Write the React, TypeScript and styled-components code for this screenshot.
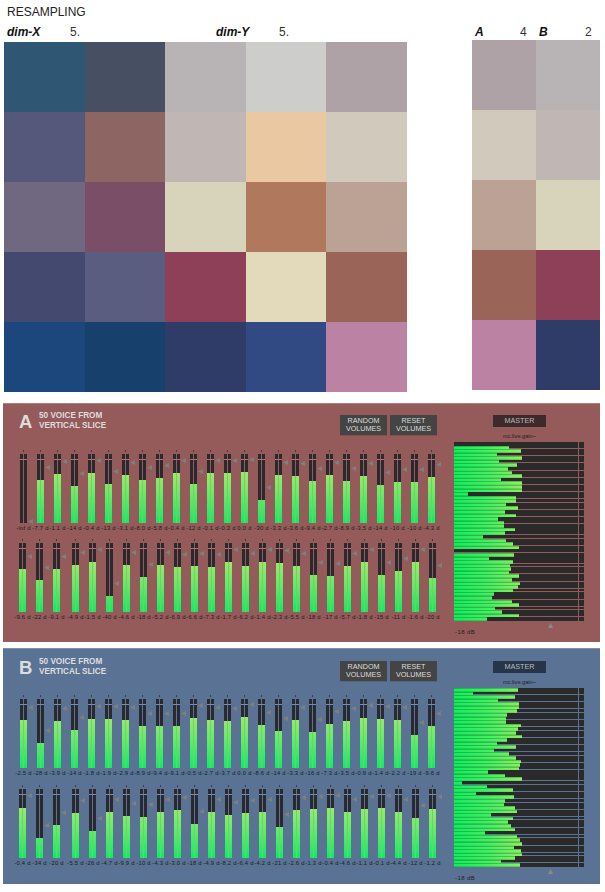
import React from "react";
import styled, { createGlobalStyle } from "styled-components";

type Voice = [string, number, number]; // label, fader level, width in the gain strip

const gridColors = [
  "#2f5673", "#474f63", "#b8b4b5", "#cdcdcb", "#aea2a6",
  "#55587a", "#8d6663", "#c0b6b4", "#eac8a2", "#d0c9bc",
  "#6f6880", "#7a4e66", "#d8d4bc", "#b0785c", "#bba294",
  "#43496f", "#5a5c80", "#8e4059", "#e2dabb", "#9a6458",
  "#1c477c", "#17406c", "#2f3c68", "#324a84", "#bb82a4",
];
const sideColors = [
  "#aea2a6", "#b8b4b5",
  "#d0c9bc", "#c0b6b4",
  "#bba294", "#d8d4bc",
  "#9a6458", "#8e4059",
  "#bb82a4", "#2f3c68",
];

const voicesA: Voice[][] = [
  [
    ["-inf d", 0, 0], ["-7.7 d", 43, 55], ["-1.1 d", 49, 67], ["-14 d", 37, 43], ["-0.4 d", 50, 68],
    ["-13 d", 39, 45], ["-3.1 d", 48, 63], ["-8.0 d", 43, 54], ["-5.8 d", 45, 58], ["-0.4 d", 50, 68],
    ["-12 d", 39, 47], ["-0.1 d", 50, 68], ["-0.3 d", 50, 68], ["0.0 d", 51, 68], ["-30 d", 23, 14],
    ["-3.3 d", 48, 62], ["-3.6 d", 47, 62], ["-9.4 d", 42, 52], ["-2.7 d", 48, 64], ["-8.9 d", 42, 51],
    ["-3.5 d", 47, 62], ["-14 d", 38, 44], ["-10 d", 41, 50], ["-10 d", 41, 50], ["-4.3 d", 46, 61],
  ],
  [
    ["-9.6 d", 43, 51], ["-22 d", 32, 29], ["-9.1 d", 43, 52], ["-4.9 d", 47, 59], ["-1.5 d", 50, 65],
    ["-40 d", 16, 0], ["-4.6 d", 47, 60], ["-18 d", 35, 35], ["-5.2 d", 47, 59], ["-6.9 d", 45, 56],
    ["-6.6 d", 46, 57], ["-7.3 d", 45, 55], ["-1.7 d", 50, 65], ["-6.2 d", 46, 58], ["-1.4 d", 50, 66],
    ["-2.3 d", 49, 64], ["-5.5 d", 46, 59], ["-18 d", 37, 40], ["-17 d", 36, 38], ["-5.7 d", 46, 58],
    ["-1.8 d", 50, 65], ["-15 d", 37, 41], ["-11 d", 41, 48], ["-1.6 d", 50, 65], ["-20 d", 34, 33],
  ],
];

const voicesB: Voice[][] = [
  [
    ["-2.5 d", 48, 64], ["-28 d", 25, 19], ["-3.9 d", 47, 61], ["-14 d", 38, 44], ["-1.8 d", 49, 65],
    ["-1.9 d", 49, 65], ["-2.9 d", 48, 63], ["-8.9 d", 42, 53], ["-9.4 d", 42, 52], ["-9.1 d", 42, 52],
    ["-0.5 d", 50, 67], ["-2.7 d", 48, 64], ["-3.7 d", 47, 62], ["0.0 d", 51, 68], ["-8.6 d", 43, 53],
    ["-14 d", 37, 43], ["-3.3 d", 48, 62], ["-16 d", 36, 40], ["-7.3 d", 44, 55], ["-3.5 d", 47, 62],
    ["-0.9 d", 50, 67], ["-1.4 d", 49, 66], ["-2.2 d", 48, 65], ["-19 d", 33, 34], ["-9.6 d", 42, 51],
  ],
  [
    ["-0.4 d", 50, 68], ["-34 d", 20, 8], ["-20 d", 33, 33], ["-5.5 d", 45, 59], ["-26 d", 27, 22],
    ["-4.7 d", 46, 60], ["-9.9 d", 42, 51], ["-10 d", 41, 50], ["-4.3 d", 46, 61], ["-3.0 d", 48, 63],
    ["-18 d", 34, 37], ["-4.9 d", 46, 59], ["-8.2 d", 43, 54], ["-6.4 d", 45, 57], ["-4.2 d", 46, 61],
    ["-21 d", 31, 31], ["-2.6 d", 48, 63], ["-1.3 d", 49, 66], ["-0.4 d", 50, 68], ["-4.6 d", 46, 60],
    ["-1.1 d", 49, 67], ["-0.1 d", 50, 68], ["-4.4 d", 46, 61], ["-12 d", 40, 47], ["-1.2 d", 49, 66],
  ],
];

const linesA = [1, 3, 5, 7, 9, 11, 13, 15, 16, 18, 20, 22, 25, 26, 28, 30, 33, 34, 36, 38, 40, 41, 43, 45, 46, 48];
const linesB = [1, 3, 5, 6, 8, 10, 11, 13, 15, 17, 18, 20, 22, 25, 26, 28, 30, 31, 33, 35, 36, 38, 40, 41, 43, 45, 46, 48];

const Fader: React.FC<{ voice: Voice }> = ({ voice }) => {
  const [label, level] = voice;
  return (
    <Column>
      <Meter>
        <Channel>
          <Fill style={{ height: level }} />
        </Channel>
        <Channel>
          <Fill style={{ height: level }} />
        </Channel>
        <Handle style={{ bottom: level ? level + 10 : -1 }} />
      </Meter>
      <Reading>{label}</Reading>
    </Column>
  );
};

const VoicePanel: React.FC<{
  name: string;
  color: string;
  masterColor: string;
  height: number;
  topPad: number;
  rowGap: number;
  voices: Voice[][];
  lines: number[];
}> = ({ name, color, masterColor, height, topPad, rowGap, voices, lines }) => {
  const all = [...voices[0], ...voices[1]];
  return (
    <Panel $color={color} $height={height}>
      <LeftSide>
        <PanelHead $topPad={topPad}>
          <Letter>{name}</Letter>
          <PanelTitle>
            50 VOICE FROM
            <br />
            VERTICAL SLICE
          </PanelTitle>
          <Buttons>
            <VolumeButton>
              RANDOM
              <br />
              VOLUMES
            </VolumeButton>
            <VolumeButton>
              RESET
              <br />
              VOLUMES
            </VolumeButton>
          </Buttons>
        </PanelHead>
        <Rows $rowGap={rowGap}>
          <FaderRow $inset={12}>
            {voices[0].map((v, i) => (
              <Fader key={i} voice={v} />
            ))}
          </FaderRow>
          <ShiftedRow $inset={11}>
            {voices[1].map((v, i) => (
              <Fader key={i} voice={v} />
            ))}
          </ShiftedRow>
        </Rows>
      </LeftSide>
      <MasterSide $topPad={topPad}>
        <MasterBox $color={masterColor}>MASTER</MasterBox>
        <GainName>mc.live.gain~</GainName>
        <GainStrip>
          {all.map((v, i) => (
            <GainRow key={i} $line={lines.includes(i)}>
              <GainBar style={{ width: v[2] }} />
            </GainRow>
          ))}
        </GainStrip>
        <GainFoot>
          <DbText>-18 dB</DbText>
          <UpMark />
        </GainFoot>
      </MasterSide>
    </Panel>
  );
};

export default function App() {
  return (
    <Page>
      <GlobalStyle />
      <Heading>RESAMPLING</Heading>
      <Swatches>
        <div>
          <ParamRow $height={16}>
            <Param $width={209} $labelWidth={63}>
              <ParamName>dim-X</ParamName>
              <span>5.</span>
            </Param>
            <Param $width={100} $labelWidth={63}>
              <ParamName>dim-Y</ParamName>
              <span>5.</span>
            </Param>
          </ParamRow>
          <ColorGrid $cols={5} $cell="80.6px">
            {gridColors.map((c, i) => (
              <Swatch key={i} $color={c} />
            ))}
          </ColorGrid>
        </div>
        <div>
          <ParamRow $height={14}>
            <Param $width={64} $labelWidth={45}>
              <ParamName>A</ParamName>
              <span>4</span>
            </Param>
            <Param $width={64} $labelWidth={46}>
              <ParamName>B</ParamName>
              <span>2</span>
            </Param>
          </ParamRow>
          <ColorGrid $cols={2} $cell="64px">
            {sideColors.map((c, i) => (
              <Swatch key={i} $color={c} />
            ))}
          </ColorGrid>
        </div>
      </Swatches>
      <PanelA>
        <VoicePanel name="A" color="#955a5a" masterColor="#3c2a2c" height={239} topPad={8} rowGap={20} voices={voicesA} lines={linesA} />
      </PanelA>
      <PanelB>
        <VoicePanel name="B" color="#5a7394" masterColor="#26354a" height={236} topPad={9} rowGap={21} voices={voicesB} lines={linesB} />
      </PanelB>
    </Page>
  );
}

const GlobalStyle = createGlobalStyle`
  html, body {
    margin: 0;
    padding: 0;
    background: #fff;
  }
  body {
    font-family: "Liberation Sans", Arial, sans-serif;
    color: #222;
  }
`;

const Page = styled.div`
  width: 605px;
  height: 892px;
  overflow: hidden;
`;
const Heading = styled.div`
  padding: 5px 0 0 7px;
  height: 26px;
  box-sizing: border-box;
  font-size: 12px;
  line-height: 14px;
  color: #222;
`;
const Swatches = styled.div`
  display: flex;
  gap: 65px;
  padding-left: 4px;
`;
const ParamRow = styled.div<{ $height: number }>`
  display: flex;
  height: ${(p) => p.$height}px;
  font-size: 12px;
  line-height: 12px;
  color: #333;
`;
const Param = styled.div<{ $width: number; $labelWidth: number }>`
  display: flex;
  width: ${(p) => p.$width}px;
  padding-left: 3px;
  box-sizing: border-box;
  flex-shrink: 0;

  & > b {
    width: ${(p) => p.$labelWidth}px;
    flex-shrink: 0;
  }
`;
const ParamName = styled.b`
  font-style: italic;
  font-weight: bold;
  font-size: 12px;
  color: #111;
`;
const ColorGrid = styled.div<{ $cols: number; $cell: string }>`
  display: grid;
  grid-template-columns: repeat(${(p) => p.$cols}, ${(p) => p.$cell});
  grid-auto-rows: 70px;
`;
const Swatch = styled.div<{ $color: string }>`
  background: ${(p) => p.$color};
`;

const PanelA = styled.div`
  margin: 11px 5px 0 3px;
`;
const PanelB = styled.div`
  margin: 6px 5px 0 3px;
`;
const Panel = styled.div<{ $color: string; $height: number }>`
  --panel: ${(p) => p.$color};
  display: flex;
  height: ${(p) => p.$height}px;
  width: 597px;
  background: var(--panel);
  box-shadow: inset 0 1px 0 rgba(255, 255, 255, 0.22);
`;
const LeftSide = styled.div`
  width: 451px;
  flex-shrink: 0;
`;
const PanelHead = styled.div<{ $topPad: number }>`
  display: flex;
  align-items: flex-start;
  height: 51px;
  box-sizing: border-box;
  padding: ${(p) => p.$topPad}px 14px 0 16px;
  padding-right: 17px;
`;
const Letter = styled.div`
  width: 20px;
  margin-top: 1px;
  font-size: 18.5px;
  line-height: 20px;
  font-weight: bold;
  color: #ddd;
`;
const PanelTitle = styled.div`
  font-size: 8.2px;
  line-height: 9.7px;
  font-weight: bold;
  color: #ddd;
`;
const Buttons = styled.div`
  display: flex;
  gap: 3px;
  margin-left: auto;
  margin-top: 4px;
`;
const VolumeButton = styled.div`
  width: 47px;
  height: 20px;
  background: #444;
  color: #ddd;
  font-size: 7.2px;
  line-height: 8.6px;
  padding-top: 1.5px;
  box-sizing: border-box;
  text-align: center;
  box-shadow: 0 1px 0 rgba(0, 0, 0, 0.12);
`;
const Rows = styled.div<{ $rowGap: number }>`
  display: flex;
  flex-direction: column;
  gap: ${(p) => p.$rowGap - 10}px;
`;
const FaderRow = styled.div<{ $inset: number }>`
  display: flex;
  padding-left: ${(p) => p.$inset}px;
  height: 79px;
`;
const ShiftedRow = styled(FaderRow)`
  & > :nth-child(4) {
    margin-left: 2px;
  }
`;
const Column = styled.div`
  width: 17px;
  flex-shrink: 0;
  display: flex;
  flex-direction: column;
  align-items: center;
`;
const Meter = styled.div`
  position: relative;
  display: flex;
  gap: 1px;
  width: 7px;
  height: 69px;
  flex-shrink: 0;

  &::before {
    content: "";
    position: absolute;
    top: -4px;
    left: 3px;
    width: 1px;
    height: 2px;
    background: rgba(0, 0, 0, 0.45);
  }
  &::after {
    content: "";
    position: absolute;
    top: 5px;
    left: 0;
    width: 7px;
    height: 1px;
    background: var(--panel);
    filter: brightness(1.25);
  }
`;
const Channel = styled.div`
  width: 3px;
  height: 69px;
  background: #2a2a2e;
  display: flex;
  align-items: flex-end;

  &:first-child > div {
    box-shadow: 1px 0 0 rgba(150, 220, 120, 0.75);
  }
`;
const Fill = styled.div`
  width: 3px;
  background: linear-gradient(to bottom, #98ec68 0%, #5cf064 45%, #08f060 100%) bottom / 3px 51px no-repeat;
`;
const Handle = styled.div`
  position: absolute;
  left: 8px;
  width: 5px;
  height: 5px;
  background: #7f7f7f;
  clip-path: polygon(0 50%, 100% 0, 100% 100%);
`;
const Reading = styled.div`
  margin-top: 2px;
  font-size: 5.8px;
  line-height: 7px;
  letter-spacing: 0.28px;
  white-space: nowrap;
  color: #1c1c1c;
`;
const MasterSide = styled.div<{ $topPad: number }>`
  width: 130px;
  padding-top: ${(p) => p.$topPad + 4}px;
  display: flex;
  flex-direction: column;
  align-items: center;
`;
const MasterBox = styled.div<{ $color: string }>`
  width: 53px;
  height: 12px;
  margin-left: 1px;
  background: ${(p) => p.$color};
  color: #bbb;
  font-size: 7.2px;
  line-height: 12px;
  text-align: center;
`;
const GainName = styled.div`
  height: 15px;
  padding-top: 6px;
  box-sizing: border-box;
  font-size: 5.6px;
  line-height: 7px;
  margin-left: 1px;
  color: #222;
`;
const GainStrip = styled.div`
  position: relative;
  display: grid;
  grid-template-rows: repeat(50, 1fr);
  width: 130px;
  height: 179px;
  background: #2a2a2a;

  &::after {
    content: "";
    position: absolute;
    top: 0;
    bottom: 0;
    left: 124px;
    width: 1px;
    background: var(--panel);
  }
`;
const GainRow = styled.div<{ $line: boolean }>`
  display: flex;
  min-height: 0;
  box-shadow: ${(p) => (p.$line ? "inset 0 -1px 0 var(--panel)" : "none")};
`;
const GainBar = styled.div`
  height: 100%;
  background: linear-gradient(to right, #10ee5c 0%, #40f060 50%, #8cf060 100%) left / 68px 100% no-repeat;
  box-shadow: inset 0 1px 0 rgba(0, 60, 20, 0.28);
`;
const GainFoot = styled.div`
  display: flex;
  align-items: flex-start;
  width: 130px;
  padding-top: 2px;
`;
const DbText = styled.div`
  margin: 6px 0 0 1px;
  font-size: 6px;
  line-height: 7px;
  letter-spacing: 0.4px;
  color: #222;
`;
const UpMark = styled.div`
  width: 5px;
  height: 5px;
  margin-left: 73px;
  background: #8a8a8a;
  clip-path: polygon(50% 0, 100% 100%, 0 100%);
`;
